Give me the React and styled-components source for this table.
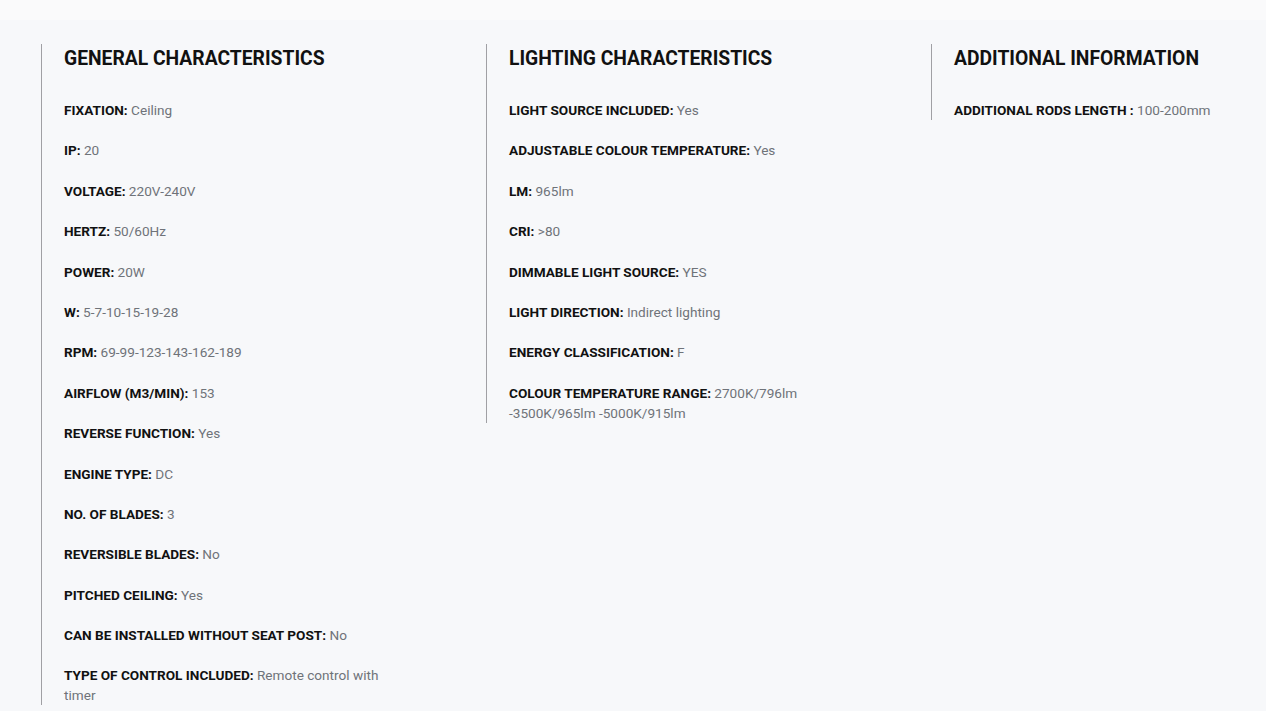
import React from 'react';
import styled, { createGlobalStyle } from 'styled-components';

const GlobalStyle = createGlobalStyle`
  html, body {
    margin: 0;
    padding: 0;
    background: #f7f8fa;
    font-family: Roboto, "Liberation Sans", Arial, sans-serif;
  }
`;

const Page = styled.div`
  min-height: 711px;
  overflow: hidden;
  background: linear-gradient(#fafafb 0, #fafafb 20px, #f7f8fa 20px);
`;

const Grid = styled.div`
  display: grid;
  grid-template-columns: repeat(3, 445px);
  align-items: start;
  padding: 44px 0 0 41px;
`;

const Column = styled.section`
  border-left: 1px solid #a0a0a4;
  padding: 0 82px 0 22px;
`;

const Heading = styled.h2`
  margin: 0 0 28px;
  padding-top: 2px;
  font-size: 19.3px;
  line-height: 26px;
  font-weight: 700;
  color: #111;
`;

const List = styled.ul`
  list-style: none;
  margin: 0;
  padding: 0;
`;

const Item = styled.li`
  font-size: 13.6px;
  line-height: 20px;
  margin-bottom: 20.4px;
  color: #6f7379;

  &:last-child {
    margin-bottom: 0;
  }
`;

const Label = styled.strong`
  font-weight: 700;
  color: #111;
`;

const sections = [
  {
    title: 'GENERAL CHARACTERISTICS',
    items: [
      ['FIXATION:', 'Ceiling'],
      ['IP:', '20'],
      ['VOLTAGE:', '220V-240V'],
      ['HERTZ:', '50/60Hz'],
      ['POWER:', '20W'],
      ['W:', '5-7-10-15-19-28'],
      ['RPM:', '69-99-123-143-162-189'],
      ['AIRFLOW (M3/MIN):', '153'],
      ['REVERSE FUNCTION:', 'Yes'],
      ['ENGINE TYPE:', 'DC'],
      ['NO. OF BLADES:', '3'],
      ['REVERSIBLE BLADES:', 'No'],
      ['PITCHED CEILING:', 'Yes'],
      ['CAN BE INSTALLED WITHOUT SEAT POST:', 'No'],
      ['TYPE OF CONTROL INCLUDED:', 'Remote control with timer'],
    ],
  },
  {
    title: 'LIGHTING CHARACTERISTICS',
    items: [
      ['LIGHT SOURCE INCLUDED:', 'Yes'],
      ['ADJUSTABLE COLOUR TEMPERATURE:', 'Yes'],
      ['LM:', '965lm'],
      ['CRI:', '>80'],
      ['DIMMABLE LIGHT SOURCE:', 'YES'],
      ['LIGHT DIRECTION:', 'Indirect lighting'],
      ['ENERGY CLASSIFICATION:', 'F'],
      ['COLOUR TEMPERATURE RANGE:', '2700K/796lm -3500K/965lm -5000K/915lm'],
    ],
  },
  {
    title: 'ADDITIONAL INFORMATION',
    items: [['ADDITIONAL RODS LENGTH :', '100-200mm']],
  },
];

const App = () => {
  return (
    <Page>
      <GlobalStyle />
      <Grid>
        {sections.map(section => (
          <Column key={section.title}>
            <Heading>{section.title}</Heading>
            <List>
              {section.items.map(([label, value]) => (
                <Item key={label}>
                  <Label>{label}</Label> {value}
                </Item>
              ))}
            </List>
          </Column>
        ))}
      </Grid>
    </Page>
  );
};

export default App;
